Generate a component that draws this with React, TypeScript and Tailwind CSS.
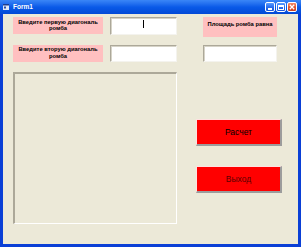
import React from "react";

const font = { fontFamily: '"Liberation Sans", Arial, sans-serif' };

function TitleButton({ kind }: { kind: "min" | "max" | "close" }) {
  const bg =
    kind === "close"
      ? "bg-linear-to-b from-[#f08c6c] via-[#e3562f] to-[#c8401f]"
      : "bg-linear-to-b from-[#5c9cff] via-[#2a6ff0] to-[#1a55d8]";
  return (
    <div className={`w-[10px] h-[10px] rounded-[2px] border border-white ${bg} flex items-center justify-center`}>
      {kind === "min" && <div className="w-[4px] h-[1.5px] bg-white mt-[4px] -ml-[1px]" />}
      {kind === "max" && <div className="w-[6px] h-[5px] border border-white border-t-2" />}
      {kind === "close" && (
        <svg width="6" height="6" viewBox="0 0 6 6">
          <path d="M0.8 0.8 L5.2 5.2 M5.2 0.8 L0.8 5.2" stroke="white" strokeWidth="1.3" />
        </svg>
      )}
    </div>
  );
}

function TextBox({ w, h, cursor }: { w: number; h: number; cursor?: boolean }) {
  return (
    <div
      className="relative bg-white border border-t-[#aca899] border-l-[#aca899] border-b-[#f4f3ee] border-r-[#f4f3ee] shadow-[inset_1px_1px_0_#d6d3c7]"
      style={{ width: w, height: h }}
    >
      {cursor && <div className="absolute left-[32px] top-[2px] w-[1px] h-[8px] bg-black" />}
    </div>
  );
}

function PinkLabel({ children, w, h, className = "" }: { children: React.ReactNode; w: number; h: number; className?: string }) {
  return (
    <div
      className={`bg-[#ffc0c0] text-black font-bold text-[5.8px] leading-[6.5px] text-center ${className}`}
      style={{ width: w, height: h, ...font }}
    >
      {children}
    </div>
  );
}

function RedButton({ children, textClass }: { children: React.ReactNode; textClass: string }) {
  return (
    <div
      className={`w-[86px] h-[27px] bg-[#ff0000] border-t border-l border-t-[#ffe0e0] border-l-[#ffe0e0] border-b-2 border-r-2 border-b-[#9c9c9c] border-r-[#9c9c9c] flex items-center justify-center text-[8.5px] ${textClass}`}
      style={font}
    >
      {children}
    </div>
  );
}

export default function App() {
  return (
    <div className="w-[301px] h-[247px] flex flex-col bg-[#0a3fd6] overflow-hidden">
      <div className="h-[14px] flex items-center bg-linear-to-b from-[#3a86f7] via-[#0a5ae8] to-[#0349d6] pl-[3px] pr-[4px]">
        <svg width="6" height="6" viewBox="0 0 6 6" className="mr-[4px]">
          <rect x="0" y="0" width="6" height="6" fill="#dfe8f6" />
          <rect x="0" y="0" width="6" height="1.5" fill="#1c3c8c" />
          <rect x="1" y="2.5" width="2" height="2" fill="#2c4ea6" />
        </svg>
        <span className="text-white font-bold text-[6.5px] leading-none" style={font}>
          Form1
        </span>
        <div className="ml-auto flex gap-[1px]">
          <TitleButton kind="min" />
          <TitleButton kind="max" />
          <TitleButton kind="close" />
        </div>
      </div>
      <div className="flex-1 mx-[3px] mb-[3px] bg-[#ece9d8] flex pl-[10px] pt-[3px]">
        <div className="w-[164px] flex flex-col">
          <div className="flex items-start justify-between">
            <PinkLabel w={90} h={17} className="pt-[1.5px]">
              Введите первую диагональ
              <br />
              ромба
            </PinkLabel>
            <TextBox w={67} h={18} cursor />
          </div>
          <div className="flex items-start justify-between mt-[10px]">
            <PinkLabel w={90} h={17} className="pt-[1px]">
              Введите вторую диагональ
              <br />
              ромба
            </PinkLabel>
            <TextBox w={67} h={17} />
          </div>
          <div className="mt-[10px] h-[152px] border-t-2 border-l-2 border-t-[#aca899] border-l-[#aca899] border-b border-r border-b-white border-r-white" />
        </div>
        <div className="ml-[19px] w-[86px] flex flex-col">
          <PinkLabel w={74} h={20} className="ml-[7px] pt-[4px]">
            Площадь ромба равна
          </PinkLabel>
          <div className="ml-[7px] mt-[8px]">
            <TextBox w={74} h={17} />
          </div>
          <div className="mt-[57px]">
            <RedButton textClass="text-black">Расчет</RedButton>
          </div>
          <div className="mt-[20px]">
            <RedButton textClass="text-[#5a0000]">Выход</RedButton>
          </div>
        </div>
      </div>
    </div>
  );
}
